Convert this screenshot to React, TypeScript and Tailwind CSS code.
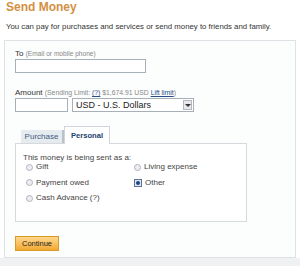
import React from "react";

function Option({ label, checked }: { label: React.ReactNode; checked?: boolean }) {
  return (
    <label className="flex h-[10px] items-center gap-[3px] text-[8px] leading-[10px] text-[#444]">
      {checked ? (
        <span className="inline-flex h-[8px] w-[8px] items-center justify-center border border-[#5d7395] bg-[#dce5f1]">
          <span className="h-[4px] w-[4px] rounded-full bg-[#1f4380]" />
        </span>
      ) : (
        <span className="inline-block h-[7px] w-[7px] rounded-full border border-[#aeb5bd] bg-[#eceef1]" />
      )}
      {label}
    </label>
  );
}

export default function App() {
  return (
    <div className="h-[266px] w-[300px] overflow-hidden bg-white font-['Liberation_Sans',Arial,sans-serif]">
      <h1 className="pl-[6px] pt-[1px] text-[12px] font-bold leading-[12px] text-[#d39043]">Send Money</h1>
      <p className="pl-[6px] pt-[9px] text-[7.8px] leading-[10px] text-[#333]">
        You can pay for purchases and services or send money to friends and family.
      </p>

      <div className="mx-[4px] mt-[8px] h-[218px] border border-[#dde2e7] bg-[#fcfdfd] px-[10px]">
        <div className="pt-[8px] text-[8px] leading-[10px] text-[#333]">
          To <span className="text-[6.6px] text-[#888]">(Email or mobile phone)</span>
        </div>
        <div className="h-[14px] w-[131px] border border-[#a7afb8] bg-white" />

        <div className="pt-[15px] text-[8px] leading-[10px] text-[#333]">
          Amount{" "}
          <span className="text-[6.8px] text-[#888]">
            (Sending Limit: <span className="text-[#2a4d85] underline">(?)</span> $1,674.91 USD{" "}
            <span className="text-[#2a4d85] underline">Lift limit</span>)
          </span>
        </div>
        <div className="flex gap-[4px]">
          <div className="h-[14px] w-[53px] border border-[#a7afb8] bg-white" />
          <div className="flex h-[14px] w-[122px] items-center justify-between border border-[#a7afb8] bg-white pl-[3px] pr-[1px]">
            <span className="text-[9px] leading-[12px] text-[#222]">USD - U.S. Dollars</span>
            <span className="flex h-[10px] w-[9px] items-center justify-center border border-[#b5b9be] bg-[#e7e9ec]">
              <span className="h-0 w-0 border-x-[3px] border-t-[3px] border-x-transparent border-t-[#333]" />
            </span>
          </div>
        </div>

        <div className="mt-[14px] flex items-end pl-[6px]">
          <div className="flex h-[13px] w-[43px] items-center justify-center border-r-2 border-r-[#b9c0c8] bg-[#e6ebf0] text-[8px] text-[#3f5a80]">
            Purchase
          </div>
          <div className="relative -mb-px flex h-[18px] w-[46px] items-start justify-center border border-b-0 border-[#d0d5db] bg-white pt-[3px] text-[7.6px] font-bold text-[#22426f]">
            Personal
          </div>
        </div>
        <div className="h-[79px] w-[232px] border border-[#d6dadf] bg-white pl-[7px]">
          <div className="pt-[9px] text-[8px] leading-[9px] text-[#444]">This money is being sent as a:</div>
          <div className="grid grid-cols-[108px_1fr] gap-y-[5.5px] pl-[3px]">
            <Option label="Gift" />
            <Option label="Living expense" />
            <Option label="Payment owed" />
            <Option label="Other" checked />
            <Option label="Cash Advance (?)" />
          </div>
        </div>

        <button className="mt-[14px] flex h-[15px] w-[44px] items-center justify-center border border-[#d89a2a] bg-gradient-to-b from-[#ffd88a] to-[#f3a92c] text-[7.5px] text-[#222]">
          Continue
        </button>
      </div>
      <div className="h-[8px] bg-[#f0f1f2]" />
    </div>
  );
}
